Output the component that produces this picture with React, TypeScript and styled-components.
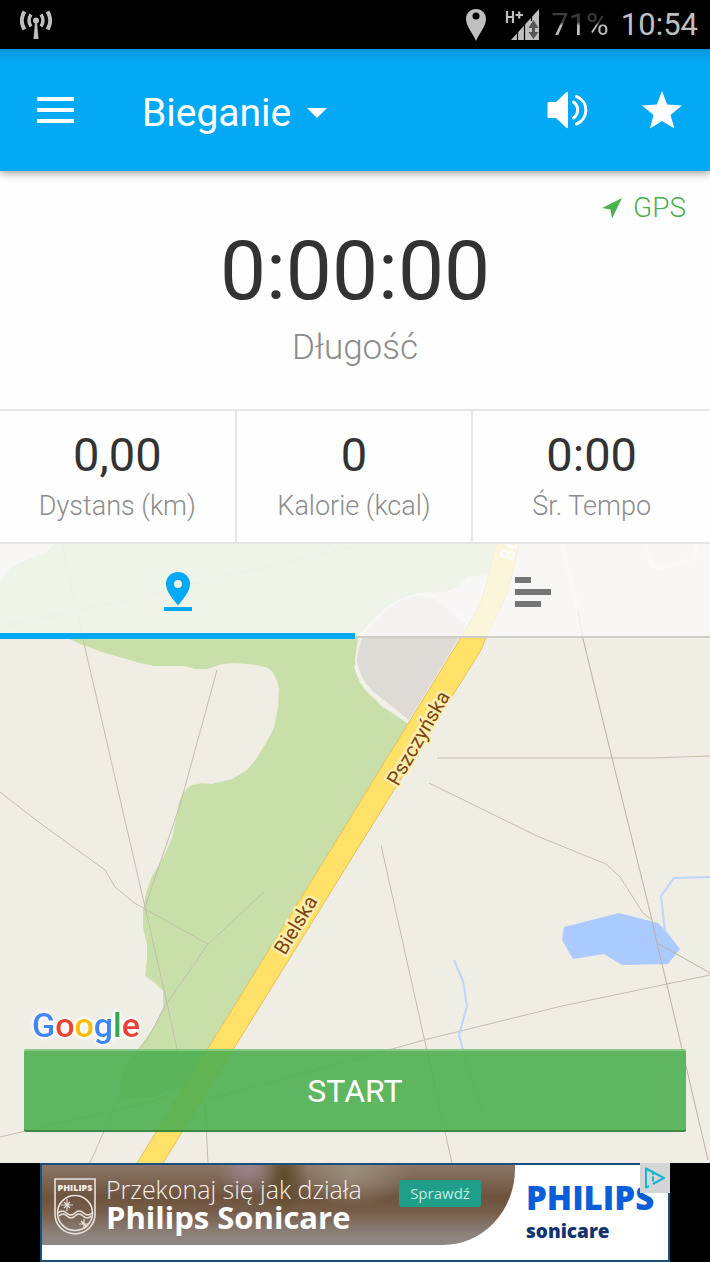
import React from "react";
import styled, { createGlobalStyle } from "styled-components";

const BLUE = "#03a9f4";
const MUTED = "#8c8c8c";
const INK = "#333333";
const LINE = "#e6e6e6";

const GlobalStyle = createGlobalStyle`
  *, *::before, *::after { box-sizing: border-box; }
  html, body, #root { margin: 0; min-height: 100%; }
  body { background: #000; font-family: Roboto, "Liberation Sans", sans-serif; color: ${INK}; }
  button { font: inherit; color: inherit; background: none; border: 0; padding: 0; margin: 0; cursor: pointer; }
  svg { display: block; }
`;

const Screen = styled.div`
  display: flex;
  flex-direction: column;
  min-height: 100vh;
`;

const StatusBar = styled.div`
  display: flex;
  align-items: center;
  height: 49px;
  padding: 0 12px 0 20px;
  background: #000;
  color: #bfbfbf;
  font-size: 31px;
  line-height: 48px;
`;

const StatusGroup = styled.div`
  display: flex;
  align-items: center;
  gap: 12px;
  margin-left: auto;
`;

const RadioIcons = styled.div`
  display: flex;
  align-items: center;
  gap: 18px;
`;

const Battery = styled.span`
  background: linear-gradient(#3c3c3c 0 44%, #bfbfbf 52%);
  background-clip: text;
  -webkit-background-clip: text;
  color: transparent;
`;

const AppBar = styled.header`
  position: relative;
  z-index: 2;
  display: flex;
  align-items: center;
  height: 122px;
  padding: 0 28px 0 36px;
  background: linear-gradient(#0597dc, ${BLUE} 14px);
  color: #fff;
  box-shadow: 0 2px 8px rgba(0, 0, 0, 0.4);
`;

const IconButton = styled.button`
  display: flex;
  align-items: center;
  justify-content: center;
  height: 48px;
`;

const TitleButton = styled.button`
  display: flex;
  align-items: center;
  gap: 16px;
  margin-left: 68px;
  padding-top: 6px;
  font-size: 39px;
  line-height: 48px;
`;

const AppActions = styled.div`
  display: flex;
  gap: 53px;
  margin-left: auto;
`;

const Timer = styled.section`
  display: flex;
  flex-direction: column;
  align-items: center;
  height: 238px;
  padding-top: 19px;
  background: #fefefe;
`;

const Gps = styled.div`
  display: flex;
  align-items: center;
  align-self: flex-end;
  gap: 10px;
  padding-right: 24px;
  color: #4caf50;
  font-size: 28px;
  font-weight: 300;
  line-height: 36px;
`;

const Elapsed = styled.div`
  font-size: 82px;
  line-height: 90px;
`;

const ElapsedLabel = styled.div`
  margin-top: 8px;
  color: ${MUTED};
  font-size: 35px;
  font-weight: 300;
  line-height: 48px;
`;

const Metrics = styled.dl`
  display: grid;
  grid-template-columns: repeat(3, 1fr);
  height: 135px;
  margin: 0;
  border-top: 2px solid ${LINE};
  border-bottom: 2px solid ${LINE};
  background: #fefefe;
`;

const Metric = styled.div`
  display: flex;
  flex-direction: column-reverse;
  justify-content: flex-end;
  padding-top: 16px;
  text-align: center;
  &:not(:last-child) { border-right: 2px solid ${LINE}; }
`;

const MetricValue = styled.dd`
  margin: 0;
  font-size: 47px;
  line-height: 56px;
`;

const MetricLabel = styled.dt`
  color: ${MUTED};
  font-size: 27px;
  font-weight: 300;
  line-height: 46px;
`;

const MapPanel = styled.section`
  position: relative;
  display: flex;
  flex: 1;
  flex-direction: column;
  justify-content: space-between;
  min-height: 480px;
  overflow: hidden;
  background: #f0ede5;
`;

const MapCanvas = styled.svg`
  position: absolute;
  inset: 0;
  width: 100%;
  height: 100%;
`;

const GoogleMark = styled.text`
  filter: drop-shadow(0 0 1px #fff) drop-shadow(0 0 1px #fff) drop-shadow(0 0 2px #fff);
`;

const Tabs = styled.div`
  position: relative;
  display: grid;
  grid-template-columns: 1fr 1fr;
  height: 95px;
`;

const Tab = styled.button<{ $active?: boolean }>`
  position: relative;
  display: flex;
  align-items: center;
  justify-content: center;
  height: ${(p) => (p.$active ? 95 : 94)}px;
  padding-top: ${(p) => (p.$active ? 6 : 4)}px;
  background: rgba(250, 250, 250, 0.78);
  color: ${(p) => (p.$active ? BLUE : "#757575")};
  border-bottom: ${(p) => (p.$active ? `6px solid ${BLUE}` : "2px solid #cfcdca")};

  & + &::before {
    content: "";
    position: absolute;
    left: 0;
    top: 16px;
    width: 1px;
    height: 63px;
    background: #d2d6cf;
  }
`;

const StartButton = styled.button`
  position: relative;
  height: 83px;
  margin: 0 24px 31px;
  border-radius: 2px;
  background: rgba(76, 175, 80, 0.89);
  box-shadow: inset 0 2px 0 rgba(255, 255, 255, 0.25), inset 0 -2px 0 rgba(30, 90, 34, 0.5);
  color: #fff;
  font-size: 32px;
  line-height: 40px;
`;

const AdBar = styled.aside`
  display: flex;
  justify-content: center;
  height: 99px;
  background: #000;
`;

const AdLink = styled.a`
  position: relative;
  display: flex;
  flex: 0 1 630px;
  border: 2px solid #17507f;
  background: #fff;
  text-decoration: none;
  font-family: "Open Sans", "Noto Sans", sans-serif;
`;

const AdPhoto = styled.div`
  display: flex;
  align-items: flex-start;
  flex: 0 0 473px;
  height: 80px;
  padding: 8px 34px 0 12px;
  border-bottom-right-radius: 72px 76px;
  color: #f4f0ec;
  background:
    radial-gradient(ellipse 30px 26px at 205px 4px, rgba(160, 140, 160, 0.7), transparent),
    radial-gradient(ellipse 24px 40px at 242px 10px, rgba(84, 66, 30, 0.8), transparent),
    radial-gradient(ellipse 60px 36px at 310px 6px, rgba(158, 146, 130, 0.9), transparent),
    linear-gradient(#8b7565, #6e543f 40%, #765d49 58%, #8d837d 88%, #8f8785);
`;

const AdCopy = styled.div`
  display: flex;
  flex: 1;
  flex-direction: column;
  margin-left: 10px;
  white-space: nowrap;
`;

const AdLine = styled.span`
  font-size: 25px;
  font-weight: 300;
  line-height: 32px;
`;

const AdHeadline = styled.strong`
  font-size: 31px;
  font-weight: 700;
  line-height: 24px;
  color: #fff;
`;

const AdCta = styled.span`
  flex: 0 0 82px;
  margin-top: 7px;
  border-radius: 3px;
  background: #1f9f89;
  color: #c8ebe2;
  font-size: 15px;
  line-height: 27px;
  text-align: center;
`;

const AdBrand = styled.div`
  display: flex;
  flex-direction: column;
  padding: 12px 0 0 11px;
`;

const BrandName = styled.span`
  color: #0b5ed7;
  font-size: 33px;
  font-weight: 800;
  line-height: 42px;
`;

const BrandLine = styled.span`
  color: #12336f;
  font-size: 19px;
  font-weight: 800;
  line-height: 24px;
`;

const AdChoices = styled.span`
  position: absolute;
  top: -2px;
  right: -2px;
  display: flex;
  align-items: center;
  justify-content: center;
  width: 30px;
  height: 30px;
  background: #d3d5d6;
`;

const Antenna = () => (
  <svg width="32" height="30" viewBox="0 0 32 30" fill="none" stroke="#bfbfbf" aria-hidden="true">
    <circle cx="16" cy="10.500" r="3" fill="#bfbfbf" stroke="none" />
    <path d="M15 12h2l1.500 17h-5z" fill="#bfbfbf" stroke="none" />
    <path d="M11 4.500C8.500 8 8.500 13 11 16.500M21 4.500C23.500 8 23.500 13 21 16.500" strokeWidth="3.600" />
    <path d="M4.500 1.500C1 7 1 14 4.500 19.500M27.500 1.500C31 7 31 14 27.500 19.500" strokeWidth="4" />
  </svg>
);

const LocationPin = () => (
  <svg width="22" height="34" viewBox="0 0 22 34" aria-hidden="true">
    <path fill="#bfbfbf" fillRule="evenodd" d="M11 1C5 1 1 5.500 1 11c0 7 6 13 10 22 4-9 10-15 10-22C21 5.500 17 1 11 1zm0 3.500a3.500 3.500 0 1 1 0 7 3.500 3.500 0 0 1 0-7z" />
  </svg>
);

const Signal = () => (
  <svg width="34" height="34" viewBox="0 0 34 34" aria-hidden="true">
    <path d="M6 32L34 1v31z" fill="#bfbfbf" />
    <path d="M12.500 24v8M19.500 16v16M26.500 8v5" stroke="#000" strokeWidth="1.200" />
    <path d="M28.500 12l-5 8h3.500v4h-3.500l5 7 5-7H30v-4h3.500z" fill="#555" />
    <path d="M2 3v12M8 3v12M2 9h6M10.500 7h7.500M14.200 3.500v7" stroke="#bfbfbf" strokeWidth="2.200" fill="none" />
  </svg>
);

const MenuIcon = () => (
  <svg width="38" height="28" viewBox="0 0 38 28" fill="#fff" aria-hidden="true">
    <path d="M1 1h37v4H1zM1 12h37v4H1zM1 23h37v4H1z" />
  </svg>
);

const Caret = () => (
  <svg width="20" height="10" viewBox="0 0 20 10" aria-hidden="true">
    <path d="M0 0h20l-10 10z" fill="#fff" />
  </svg>
);

const Speaker = () => (
  <svg width="42" height="38" viewBox="0 0 42 38" aria-hidden="true">
    <path d="M2 11h7L19 1.500Q21 0 21 2v34q0 2-2 .5L9 27H2q-1.500 0-1.500-1.500v-13Q.5 11 2 11z" fill="#fff" />
    <path d="M26.500 11c5.500 4 5.500 12 0 16M29.500 5.500C42 10 42 28 29.500 33" fill="none" stroke="#fff" strokeWidth="3" strokeLinecap="round" />
  </svg>
);

const Star = () => (
  <svg width="40" height="38" viewBox="0 0 40 38" aria-hidden="true">
    <path d="M20 0l5.200 13.500L40 14.500 28.500 24 32.500 37.500 20 30 8 37.500 11.500 24 0 14.500l14.800-1z" fill="#fff" />
  </svg>
);

const GpsArrow = () => (
  <svg width="22" height="22" viewBox="0 0 22 22" aria-hidden="true">
    <path d="M21 1L11 21.500 9.500 12.500 1 11z" fill="#4caf50" />
  </svg>
);

const MapTabIcon = () => (
  <svg width="28" height="40" viewBox="0 0 28 40" fill={BLUE} aria-hidden="true">
    <path fillRule="evenodd" d="M14 0C7 0 2 5 2 12c0 8 7 15 12 21.500C19 27 26 20 26 12 26 5 21 0 14 0zm0 8a4 4 0 1 1 0 8 4 4 0 0 1 0-8z" />
    <path d="M0 35h28v4H0z" />
  </svg>
);

const SplitsTabIcon = () => (
  <svg width="36" height="32" viewBox="0 0 36 32" fill="#757575" aria-hidden="true">
    <path d="M0 1h16v6H0zM0 13h36v6H0zM0 25h26v6H0z" />
  </svg>
);

const Shield = () => (
  <svg width="42" height="62" viewBox="0 -5 42 62" fill="none" stroke="#e8e2dc" strokeWidth="1.600" aria-hidden="true">
    <path d="M1 1h40v35c0 11-8 19-20 20C9 55 1 47 1 36z" />
    <circle cx="21" cy="35" r="17.500" />
    <path d="M4 35q4-4 8.500 0t8.500 0 8.500 0 8.500 0M5 38q4-4 8 0t8 0 8 0 8 0" />
    <path d="M13 21v12M7 27h12M10 24l6 6M16 24l-6 6M30 41v10M25 46h10M27 43l6 6" strokeWidth="1.200" />
    <text x="21" y="13" textAnchor="middle" fill="#f4f0ec" stroke="none" fontSize="9" fontWeight="800">PHILIPS</text>
  </svg>
);

const ChoicesIcon = () => (
  <svg width="22" height="22" viewBox="0 0 22 22" fill="none" stroke="#16b5d0" strokeWidth="2" strokeLinejoin="round" aria-hidden="true">
    <path d="M5 19l-3 1.500V1.500L20 11 9 17" />
    <path d="M9 9.500v5M9 6v2" />
  </svg>
);

const RouteMap = () => (
  <MapCanvas viewBox="0 544 710 619" preserveAspectRatio="xMidYMid slice" role="img" aria-label="Mapa">
    <rect y="544" width="710" height="619" fill="#f0ede5" />
    <path
      fill="#c9dfaa"
      d="M55 544L45 553 25 560 10 568 0 581V635L68 638 80 644 105 653 123 658 140 663 154 666H185L195 669H207L222 664 235 663 257 665 268 668Q275 672 279 688L278 708 274 728 266 743 257 758 247 770 232 779 212 784 202 783 192 785Q183 790 179 802L176 820 172 838 163 858 152 876 146 893 143 910V927L147 945V960L145 976 155 983 163 991V1007L155 1025 145 1040 138 1050 125 1065 119 1085 122 1097 150 1098 190 1085 410 725 398 717 380 705 362 683 355 665 358 637 375 617 398 600 420 593 445 592 458 587 468 577 487 575 500 544z"
    />
    <path fill="#dedad5" stroke="#f3f0ec" strokeWidth="2" d="M420 594Q392 600 378 617 358 634 356 660 358 678 372 692L390 706 409 722 465 630 467 620 435 598z" />
    <path fill="none" stroke="#f3f0ec" strokeWidth="4" d="M356 665Q359 682 372 694L390 708 406 720" />
    <path fill="none" stroke="#f8f6f2" strokeWidth="4" d="M562 544L578 610M644 544L650 560Q655 570 662 568L691 560Q698 556 696 544M456 615L468 622" />
    <g fill="none" stroke="#c4bdab" strokeWidth="1">
      <path d="M62 544L83 639 145 907 167 1003 177 1050 182 1073 180 1090 157 1100 0 1137" />
      <path d="M0 792L40 823 105 870 115 887 133 902 145 909 208 944 264 892" />
      <path d="M217 670L180 805 145 907" />
      <path d="M208 944L167 1003 148 1038 138 1050 120 1095 90 1163" />
      <path d="M0 622L7 625 77 611 163 591 353 547M329 544L334 551" />
      <path d="M437 758H652L710 756M429 783L537 836 606 864 620 877 643 913 652 920" />
      <path d="M710 975L562 1006 424 1040 392 1049 205 1100 208 1163" />
      <path d="M381 845L425 1042 452 1163" />
    </g>
    <path fill="#abcaff" d="M564 927L619 913 658 923 665 930 680 949 668 964 622 965 604 954 573 959 562 940z" />
    <path fill="none" stroke="#bbd4fb" strokeWidth="2" d="M710 877L674 878 661 896 665 932M454 960L463 981 467 1006 459 1035 463 1050 482 1111" />
    <path fill="none" stroke="#b9b2a1" strokeWidth="1" d="M578 610L583 639 612 758 652 920 657 943 667 985 708 1160M657 943L710 973" />
    <path fill="#ffe168" stroke="#e5bf62" strokeWidth="1" d="M497 540L484 593 477 610 460 639 306 890 137 1163 130 1175H156L163 1163 332 890 481 650 486 637 498 613 507 593 514 567 520 540z" />
    <g fontFamily="Roboto, sans-serif" strokeLinejoin="round">
      <text transform="translate(513 562) rotate(-74)" fontSize="20" fontWeight="700" fill="#fff">86</text>
      <g fill="#7a4510" stroke="#fdeeb0" strokeWidth="5" fontSize="20" paintOrder="stroke">
        <text transform="translate(398 787) rotate(-60)">Pszczyńska</text>
        <text transform="translate(285 956) rotate(-59)">Bielska</text>
      </g>
      <GoogleMark x="32" y="1037" fontSize="34" fontWeight="500">
        <tspan fill="#4285f4">G</tspan>
        <tspan fill="#ea4335">o</tspan>
        <tspan fill="#fbbc05">o</tspan>
        <tspan fill="#4285f4">g</tspan>
        <tspan fill="#34a853">l</tspan>
        <tspan fill="#ea4335">e</tspan>
      </GoogleMark>
    </g>
  </MapCanvas>
);

const metrics = [
  { label: "Dystans (km)", value: "0,00" },
  { label: "Kalorie (kcal)", value: "0" },
  { label: "Śr. Tempo", value: "0:00" },
];

export default function App() {
  return (
    <Screen>
      <GlobalStyle />
      <StatusBar>
        <Antenna />
        <StatusGroup>
          <RadioIcons>
            <LocationPin />
            <Signal />
          </RadioIcons>
          <Battery>71%</Battery>
          <span>10:54</span>
        </StatusGroup>
      </StatusBar>
      <AppBar>
        <IconButton aria-label="Menu"><MenuIcon /></IconButton>
        <TitleButton>Bieganie<Caret /></TitleButton>
        <AppActions>
          <IconButton aria-label="Dźwięk"><Speaker /></IconButton>
          <IconButton aria-label="Ulubione"><Star /></IconButton>
        </AppActions>
      </AppBar>
      <Timer>
        <Gps><GpsArrow />GPS</Gps>
        <Elapsed>0:00:00</Elapsed>
        <ElapsedLabel>Długość</ElapsedLabel>
      </Timer>
      <Metrics>
        {metrics.map((m) => (
          <Metric key={m.label}>
            <MetricLabel>{m.label}</MetricLabel>
            <MetricValue>{m.value}</MetricValue>
          </Metric>
        ))}
      </Metrics>
      <MapPanel>
        <RouteMap />
        <Tabs role="tablist">
          <Tab $active role="tab" aria-selected="true" aria-label="Mapa"><MapTabIcon /></Tab>
          <Tab role="tab" aria-selected="false" aria-label="Odcinki"><SplitsTabIcon /></Tab>
        </Tabs>
        <StartButton>START</StartButton>
      </MapPanel>
      <AdBar>
        <AdLink href="#sonicare">
          <AdPhoto>
            <Shield />
            <AdCopy>
              <AdLine>Przekonaj się jak działa</AdLine>
              <AdHeadline>Philips Sonicare</AdHeadline>
            </AdCopy>
            <AdCta>Sprawdź</AdCta>
          </AdPhoto>
          <AdBrand>
            <BrandName>PHILIPS</BrandName>
            <BrandLine>sonicare</BrandLine>
          </AdBrand>
          <AdChoices><ChoicesIcon /></AdChoices>
        </AdLink>
      </AdBar>
    </Screen>
  );
}
